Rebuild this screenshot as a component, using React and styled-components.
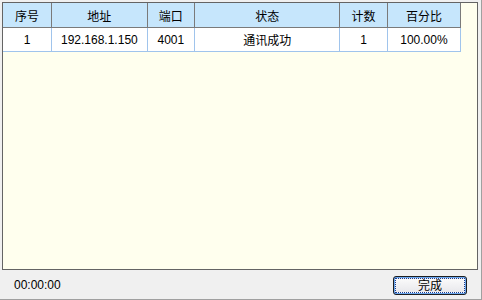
import styled, { createGlobalStyle } from "styled-components";

const GlobalStyle = createGlobalStyle`
  html, body {
    margin: 0;
    padding: 0;
    background: #f0f0f0;
  }
  body {
    font-family: "Liberation Sans", "Noto Sans CJK SC", sans-serif;
    font-size: 12px;
    color: #000;
  }
`;

const columns = [
	{ key: "id", title: "序号", width: 48 },
	{ key: "addr", title: "地址", width: 94 },
	{ key: "port", title: "端口", width: 47 },
	{ key: "state", title: "状态", width: 143 },
	{ key: "count", title: "计数", width: 47 },
	{ key: "pct", title: "百分比", width: 72 },
];

const rows = [
	{ id: "1", addr: "192.168.1.150", port: "4001", state: "通讯成功", count: "1", pct: "100.00%" },
];

const App = () => {
	return (
		<Window>
			<GlobalStyle />
			<Panel>
				<Grid>
					<colgroup>
						{columns.map((c) => (
							<col key={c.key} style={{ width: c.width }} />
						))}
					</colgroup>
					<thead>
						<tr>
							{columns.map((c) => (
								<HeadCell key={c.key}>{c.title}</HeadCell>
							))}
						</tr>
					</thead>
					<tbody>
						{rows.map((r) => (
							<tr key={r.id}>
								{columns.map((c) => (
									<Cell key={c.key}>{r[c.key]}</Cell>
								))}
							</tr>
						))}
					</tbody>
				</Grid>
			</Panel>
			<Footer>
				<Clock>00:00:00</Clock>
				<DoneButton>
					<span>完成</span>
				</DoneButton>
			</Footer>
		</Window>
	);
};

export default App;

const Window = styled.div`
	width: 482px;
	height: 300px;
	box-sizing: border-box;
	padding: 2px 2px 0 2px;
	border-right: 1px solid #a0a0a0;
	border-bottom: 1px solid #a0a0a0;
	background: #f0f0f0;
	display: flex;
	flex-direction: column;
	overflow: hidden;
`;

const Panel = styled.div`
	height: 268px;
	box-sizing: border-box;
	border: 1px solid #646464;
	background: #ffffee;
	margin-right: 1px;
`;

const Grid = styled.table`
	border-collapse: collapse;
	table-layout: fixed;
	width: 458px;
	border-right: 1px solid #a0c4ec;
`;

const HeadCell = styled.th`
	height: 24px;
	padding: 0;
	background: #c6e6fc;
	border-right: 1px solid #7a7a7a;
	border-bottom: 1px solid #7a7a7a;
	font-weight: normal;
	font-family: "Noto Sans CJK SC", sans-serif;
	font-size: 12px;
	text-align: center;
	vertical-align: middle;
	color: #000;
`;

const Cell = styled.td`
	height: 23px;
	padding: 0;
	background: #fff;
	border-right: 1px solid #a0c4ec;
	border-bottom: 1px solid #a0c4ec;
	text-align: center;
	vertical-align: middle;
	font-family: "Liberation Sans", "Noto Sans CJK SC", sans-serif;
	font-size: 12px;
	white-space: nowrap;
`;

const Footer = styled.div`
	flex: 1;
	display: flex;
	align-items: center;
	justify-content: space-between;
	padding: 0 12px 0 12px;
`;

const Clock = styled.span`
	font-family: "Liberation Sans", sans-serif;
	font-size: 12px;
	letter-spacing: 0;
	margin-top: 1px;
`;

const DoneButton = styled.button`
	width: 74px;
	height: 19px;
	box-sizing: border-box;
	padding: 1px;
	border: 1px solid #1e1e1e;
	border-radius: 3px;
	background: #6aa6ee;
	display: flex;
	margin-top: 1px;

	span {
		flex: 1;
		display: flex;
		align-items: center;
		justify-content: center;
		border: 1px dotted #1e3c8c;
		background: linear-gradient(#fafafa, #e8e8ec);
		font-family: "Noto Sans CJK SC", sans-serif;
		font-size: 12px;
		color: #000;
		line-height: 1;
	}
`;
